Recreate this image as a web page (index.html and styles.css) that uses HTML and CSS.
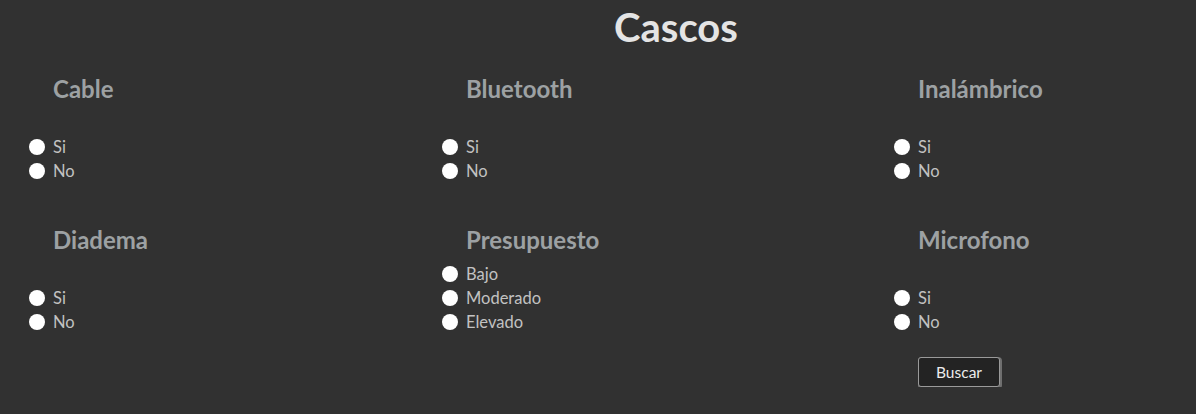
FILE: index.html
```html
<!DOCTYPE html>
<html lang="es">
<head>
<meta charset="utf-8">
<title>Cascos</title>
<link rel="stylesheet" href="styles.css">
</head>
<body>
<header class="page-header">
  <h1 class="title">Cascos</h1>
</header>
<form class="filters">
  <div class="grid">
    <fieldset class="group">
      <h2 class="group-title">Cable</h2>
      <div class="options">
        <label class="option"><input type="radio" name="cable" class="radio"><span>Si</span></label>
        <label class="option"><input type="radio" name="cable" class="radio"><span>No</span></label>
      </div>
    </fieldset>
    <fieldset class="group">
      <h2 class="group-title">Bluetooth</h2>
      <div class="options">
        <label class="option"><input type="radio" name="bt" class="radio"><span>Si</span></label>
        <label class="option"><input type="radio" name="bt" class="radio"><span>No</span></label>
      </div>
    </fieldset>
    <fieldset class="group">
      <h2 class="group-title">Inalámbrico</h2>
      <div class="options">
        <label class="option"><input type="radio" name="wl" class="radio"><span>Si</span></label>
        <label class="option"><input type="radio" name="wl" class="radio"><span>No</span></label>
      </div>
    </fieldset>
    <fieldset class="group">
      <h2 class="group-title">Diadema</h2>
      <div class="options">
        <label class="option"><input type="radio" name="dia" class="radio"><span>Si</span></label>
        <label class="option"><input type="radio" name="dia" class="radio"><span>No</span></label>
      </div>
    </fieldset>
    <fieldset class="group">
      <h2 class="group-title">Presupuesto</h2>
      <div class="options">
        <label class="option"><input type="radio" name="pre" class="radio"><span>Bajo</span></label>
        <label class="option"><input type="radio" name="pre" class="radio"><span>Moderado</span></label>
        <label class="option"><input type="radio" name="pre" class="radio"><span>Elevado</span></label>
      </div>
    </fieldset>
    <fieldset class="group">
      <h2 class="group-title">Microfono</h2>
      <div class="options">
        <label class="option"><input type="radio" name="mic" class="radio"><span>Si</span></label>
        <label class="option"><input type="radio" name="mic" class="radio"><span>No</span></label>
      </div>
    </fieldset>
  </div>
  <div class="actions">
    <button type="button" class="btn">Buscar</button>
  </div>
</form>
</body>
</html>
```
FILE: styles.css
```css
* { box-sizing: border-box; }
html, body {
  margin: 0;
  background: #313131;
  font-family: Lato, "Open Sans", sans-serif;
}
.page-header {
  display: flex;
  justify-content: center;
  padding-left: 156px;
}
.title {
  margin: 0;
  font-size: 40px;
  line-height: 54px;
  font-weight: 700;
  color: #e4e4e4;
}
.filters {
  margin-top: 21px;
  padding-left: 29px;
}
.grid {
  display: grid;
  grid-template-columns: 413px 452px 1fr;
  grid-auto-rows: 108px;
  row-gap: 43px;
}
.group {
  margin: 0;
  padding: 0;
  border: 0;
  min-width: 0;
  display: flex;
  flex-direction: column;
  justify-content: space-between;
}
.group-title {
  margin: 0 0 0 24px;
  font-size: 24px;
  line-height: 28px;
  font-weight: 700;
  color: #9da1a3;
}
.options {
  display: flex;
  flex-direction: column;
}
.option {
  display: flex;
  align-items: center;
  gap: 8px;
  height: 24px;
  font-size: 16.5px;
  color: #c2c2c2;
}
.radio {
  appearance: none;
  -webkit-appearance: none;
  margin: 0;
  width: 16px;
  height: 16px;
  border-radius: 50%;
  background: #ffffff;
  flex: none;
}
.actions {
  display: grid;
  grid-template-columns: 413px 452px 1fr;
  margin-top: 23px;
}
.btn {
  grid-column: 3;
  justify-self: start;
  margin-left: 24px;
  width: 82px;
  height: 30px;
  padding: 0;
  background: #232323;
  color: #ececec;
  font-family: Lato, "Open Sans", sans-serif;
  font-size: 15.5px;
  border: 1px solid #9a9a9a;
  border-radius: 3px;
  box-shadow: 1px 1px 0 1px #6f6f6f;
}
```
